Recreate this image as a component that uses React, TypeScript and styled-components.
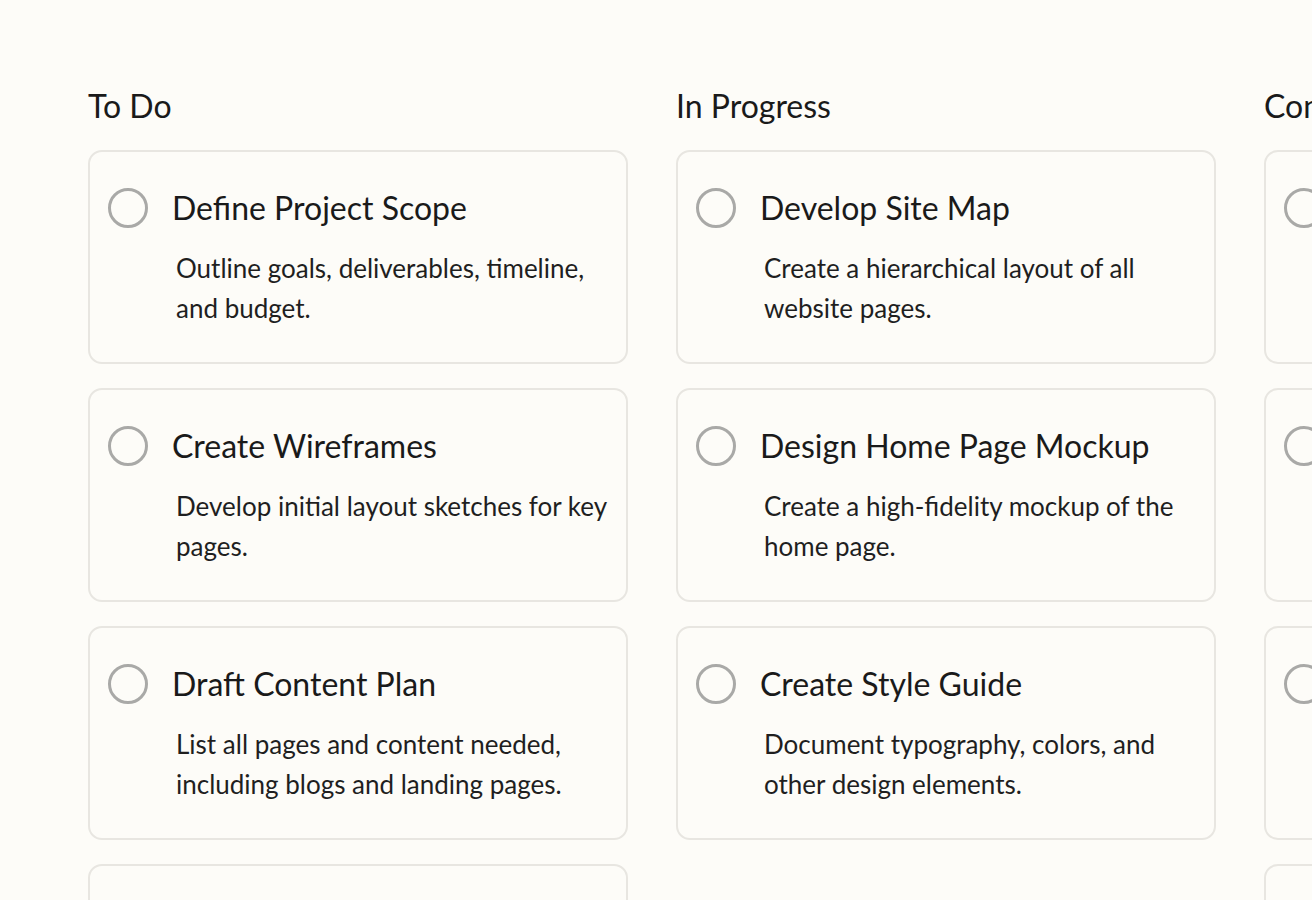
import React from "react";
import styled, { createGlobalStyle } from "styled-components";

const Global = createGlobalStyle`
  html, body { margin: 0; padding: 0; background: #fdfcf8; }
  body { font-family: Lato, "Noto Sans", sans-serif; color: #1c1c1c; overflow: hidden; }
`;

const Board = styled.div`
  display: flex;
  gap: 48px;
  padding: 84px 0 0 88px;
  width: 1312px;
  height: 900px;
  box-sizing: border-box;
  overflow: hidden;
`;

const Column = styled.section`
  flex: 0 0 540px;
  display: flex;
  flex-direction: column;
`;

const ColumnTitle = styled.h2`
  margin: 0 0 22px;
  font-size: 32px;
  font-weight: 400;
  line-height: 44px;
  color: #1a1a1a;
  white-space: nowrap;
`;

const CardList = styled.div`
  display: flex;
  flex-direction: column;
  gap: 24px;
`;

const Card = styled.article`
  box-sizing: border-box;
  height: 214px;
  border: 2px solid #e8e6e1;
  border-radius: 14px;
  padding: 35px 10px 0 18px;
  background: #fdfcf8;
`;

const TitleRow = styled.div`
  display: flex;
  align-items: center;
  gap: 24px;
  height: 42px;
`;

const Check = styled.span`
  flex: 0 0 40px;
  width: 40px;
  height: 40px;
  box-sizing: border-box;
  border: 3px solid #a9a9a7;
  border-radius: 50%;
`;

const Title = styled.h3`
  margin: 0;
  font-size: 32px;
  font-weight: 400;
  line-height: 42px;
  color: #1a1a1a;
  white-space: nowrap;
`;

const Desc = styled.p`
  margin: 19px 0 0 68px;
  font-size: 26px;
  line-height: 40px;
  color: #1f1f1f;
  max-width: 442px;
`;

type Task = { title: string; desc: string };

const columns: { name: string; tasks: Task[] }[] = [
  {
    name: "To Do",
    tasks: [
      { title: "Define Project Scope", desc: "Outline goals, deliverables, timeline, and budget." },
      { title: "Create Wireframes", desc: "Develop initial layout sketches for key pages." },
      { title: "Draft Content Plan", desc: "List all pages and content needed, including blogs and landing pages." },
      { title: "Set Up Hosting", desc: "Choose a provider and configure the domain." },
    ],
  },
  {
    name: "In Progress",
    tasks: [
      { title: "Develop Site Map", desc: "Create a hierarchical layout of all website pages." },
      { title: "Design Home Page Mockup", desc: "Create a high-fidelity mockup of the home page." },
      { title: "Create Style Guide", desc: "Document typography, colors, and other design elements." },
    ],
  },
  {
    name: "Completed",
    tasks: [
      { title: "Kickoff Meeting", desc: "Align the team on goals and roles." },
      { title: "Stakeholder Interviews", desc: "Gather requirements from key people." },
      { title: "Competitor Research", desc: "Review sites of similar businesses." },
      { title: "Brand Audit", desc: "Assess existing brand assets." },
    ],
  },
];

export default function App() {
  return (
    <>
      <Global />
      <Board>
        {columns.map((c) => (
          <Column key={c.name}>
            <ColumnTitle>{c.name}</ColumnTitle>
            <CardList>
              {c.tasks.map((t) => (
                <Card key={t.title}>
                  <TitleRow>
                    <Check />
                    <Title>{t.title}</Title>
                  </TitleRow>
                  <Desc>{t.desc}</Desc>
                </Card>
              ))}
            </CardList>
          </Column>
        ))}
      </Board>
    </>
  );
}
